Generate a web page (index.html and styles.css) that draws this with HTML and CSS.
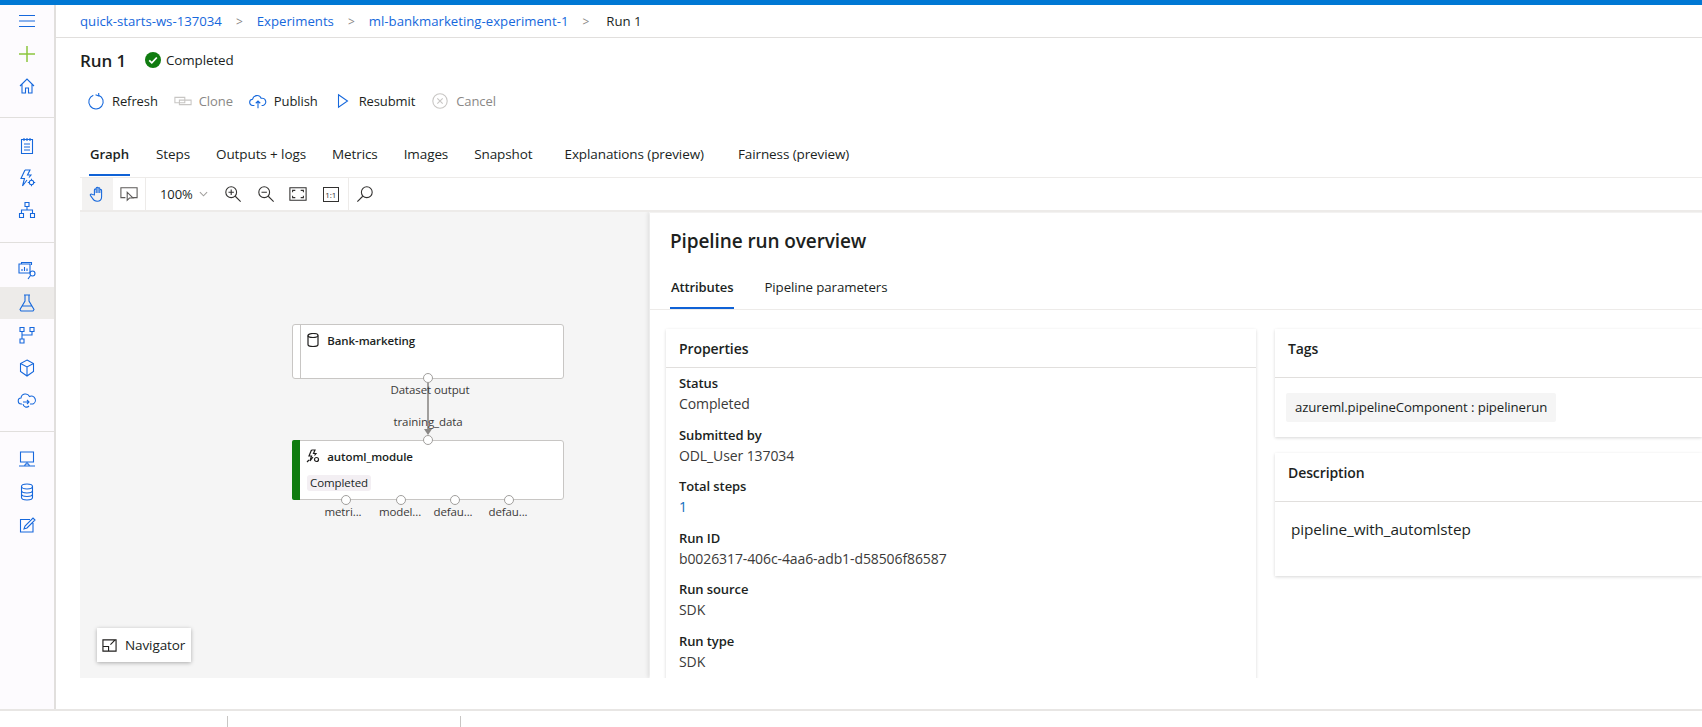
FILE: index.html
```html
<!DOCTYPE html>
<html>
<head>
	<title>Run 1</title>
	<link rel="stylesheet" href="styles.css">
</head>
<body>
	<div class="topbar"></div>
	<div class="shell">
		<nav class="sidebar">
			<div class="nav-group">
				<div class="nav-item"><svg viewBox="0 0 20 20"><path d="M2 4.500h16M2 10h16M2 15.500h16"/></svg></div>
				<div class="nav-item"><svg class="plus" viewBox="0 0 20 20"><path d="M10 2v16M2 10h16"/></svg></div>
				<div class="nav-item"><svg viewBox="0 0 20 20"><path d="M3 10l7-7 7 7M5 8.500V17h3.500v-5h3v5H15V8.500"/></svg></div>
			</div>
			<div class="nav-group">
				<div class="nav-item"><svg viewBox="0 0 20 20"><path d="M4.500 3.500h11v14h-11zM7 2v3M10 2v3M13 2v3M7 8h6M7 11h6M7 14h6"/></svg></div>
				<div class="nav-item"><svg viewBox="0 0 20 20"><path d="M8 2L4 10.500h3.500L5.500 18l4.500-6M8 2h5l-2.500 5H14l-2 2.500"/><circle cx="14.500" cy="14.500" r="2.200"/><path d="M14.500 10.800v1.500M14.500 16.700v1.500M10.800 14.500h1.500M16.700 14.500h1.500"/></svg></div>
				<div class="nav-item"><svg viewBox="0 0 20 20"><path d="M8 2.500h4v4H8zM2.500 13.500h4v4h-4zM13.500 13.500h4v4h-4zM10 6.500V10M4.500 13.500V10h11v3.500"/></svg></div>
			</div>
			<div class="nav-group">
				<div class="nav-item"><svg viewBox="0 0 20 20"><path d="M2 3h11v9H2zM4.500 3V1.500h10V4M5 10V8M7.500 10V6M10 10V7.500M11 18l2.500-3.500"/><circle cx="15.500" cy="12.500" r="2.500"/></svg></div>
				<div class="nav-item active"><svg viewBox="0 0 20 20"><path d="M7 2h6M8 2v6l-5 8.500 1 1.500h12l1-1.500L12 8V2M5.500 13h9"/></svg></div>
				<div class="nav-item"><svg viewBox="0 0 20 20"><path d="M3 2.500h4v4H3zM13 2.500h4v4h-4zM3 14h4v4H3zM5 6.500V14M5 10h10V6.500"/></svg></div>
				<div class="nav-item"><svg viewBox="0 0 20 20"><path d="M10 2l6.500 3.500v8L10 18l-6.500-4.500v-8zM3.500 5.500L10 9l6.500-3.500M10 9v9"/></svg></div>
				<div class="nav-item"><svg viewBox="0 0 20 20"><path d="M5 14H4.500a3 3 0 0 1-.5-6 4.500 4.500 0 0 1 8.500-1.500 3.500 3.500 0 0 1 3.500 7.500h-3"/><path d="M6 12h6M10 10l2 2-2 2M12 16a3.500 3.500 0 0 1-6-2"/></svg></div>
			</div>
			<div class="nav-group last">
				<div class="nav-item"><svg viewBox="0 0 20 20"><path d="M3.500 3h13v10h-13zM10 13v2M7.500 17l1-2h3l1 2zM2 17h16"/></svg></div>
				<div class="nav-item"><svg viewBox="0 0 20 20"><ellipse cx="10" cy="4.500" rx="5.500" ry="2.500"/><path d="M4.500 4.500v11c0 1.500 2.500 2.500 5.500 2.500s5.500-1 5.500-2.500v-11M4.500 8.500c0 1.500 2.500 2.500 5.500 2.500s5.500-1 5.500-2.500M4.500 12c0 1.500 2.500 2.500 5.500 2.500s5.500-1 5.500-2.500"/></svg></div>
				<div class="nav-item"><svg viewBox="0 0 20 20"><path d="M16 8v9H3.500V4.500H13M7 14l1-3 8-8 2 2-8 8z"/></svg></div>
			</div>
		</nav>

		<main class="main">
			<div class="breadcrumb">
				<a class="crumb">quick-starts-ws-137034</a>
				<span class="crumb-sep">&gt;</span>
				<a class="crumb">Experiments</a>
				<span class="crumb-sep">&gt;</span>
				<a class="crumb">ml-bankmarketing-experiment-1</a>
				<span class="crumb-sep">&gt;</span>
				<span class="crumb-current">Run 1</span>
			</div>

			<div class="content">
				<div class="title-row">
					<h1 class="run-title">Run 1</h1>
					<svg class="status-icon" viewBox="0 0 16 16"><circle cx="8" cy="8" r="8" fill="#107c10"/><path d="M4.200 8.300l2.600 2.500 5-5.300" fill="none" stroke="#fff" stroke-width="1.800"/></svg>
					<span class="status-text">Completed</span>
				</div>

				<div class="commands">
					<div class="cmd refresh"><svg viewBox="0 0 20 20"><path d="M7 3.500a8 8 0 1 0 6 0M13 1v3.500L9.500 3"/></svg>Refresh</div>
					<div class="cmd disabled clone"><svg viewBox="0 0 20 20"><path d="M1 6h11v6H1zM6 9h13v5H6z"/></svg>Clone</div>
					<div class="cmd publish"><svg viewBox="0 0 20 20"><path d="M6 15H4.500a3.500 3.500 0 0 1-.5-7 5 5 0 0 1 9.500-1 4 4 0 0 1 2 8H14M10 18v-8M7.500 12.500L10 10l2.500 2.500"/></svg>Publish</div>
					<div class="cmd resubmit"><svg viewBox="0 0 20 20"><path d="M5 3l10 7-10 7z"/></svg>Resubmit</div>
					<div class="cmd disabled cancel"><svg viewBox="0 0 20 20"><circle cx="10" cy="10" r="8"/><path d="M7 7l6 6M13 7l-6 6"/></svg>Cancel</div>
				</div>

				<div class="tabs">
					<span class="tab active">Graph</span>
					<span class="tab">Steps</span>
					<span class="tab">Outputs + logs</span>
					<span class="tab">Metrics</span>
					<span class="tab">Images</span>
					<span class="tab">Snapshot</span>
					<span class="tab explain">Explanations (preview)</span>
					<span class="tab fair">Fairness (preview)</span>
				</div>

				<div class="toolbar">
					<div class="tool hand"><svg viewBox="0 0 20 20"><path d="M6 11V5.500a1 1 0 0 1 2 0V9 3.500a1 1 0 0 1 2 0V9 4a1 1 0 0 1 2 0v5-3a1 1 0 0 1 2 0v7c0 3-2 5-5 5s-4-1-5-3l-2.500-3.500c-.5-1 1-2 2-1z"/></svg></div>
					<div class="tool select"><svg viewBox="0 0 20 20"><path d="M6 14H1V3h18v11h-5M8 8v9l2.500-2.500h4z"/></svg></div>
					<div class="tool-sep"></div>
					<div class="zoom-level">100%<svg class="chevron" viewBox="0 0 10 6"><path d="M1 1l4 4 4-4"/></svg></div>
					<div class="tool dark"><svg viewBox="0 0 20 20"><circle cx="8" cy="8" r="6"/><path d="M12.500 12.500l6 6M5 8h6M8 5v6"/></svg></div>
					<div class="tool dark"><svg viewBox="0 0 20 20"><circle cx="8" cy="8" r="6"/><path d="M12.500 12.500l6 6M5 8h6"/></svg></div>
					<div class="tool dark"><svg viewBox="0 0 20 20"><path d="M1 3h18v14H1zM4 8V6h3M13 6h3v2M16 12v2h-3M7 14H4v-2"/></svg></div>
					<div class="tool dark"><span class="one-one">1:1</span></div>
					<div class="tool-sep"></div>
					<div class="tool dark"><svg viewBox="0 0 20 20"><circle cx="12" cy="8" r="6"/><path d="M7.500 12.500l-6 6"/></svg></div>
				</div>

				<div class="graph-area">
					<section class="canvas">
						<div class="edge"></div>
						<div class="arrow"></div>

						<div class="node dataset">
							<div class="node-bar"></div>
							<svg class="node-icon" viewBox="0 0 14 14"><ellipse cx="7" cy="2.500" rx="5" ry="2"/><path d="M2 2.500v9c0 1 2 2 5 2s5-1 5-2v-9"/></svg>
							<span class="node-name">Bank-marketing</span>
						</div>
						<span class="port" style="left:343px;top:161px"></span>
						<span class="port-label" style="left:300px;top:170px;width:100px">Dataset output</span>
						<span class="port-label" style="left:298px;top:202px;width:100px">training_data</span>

						<div class="node module">
							<div class="node-bar done"></div>
							<svg class="node-icon" viewBox="0 0 14 14"><path d="M5.500 1L3 7h2.500L4 12l3-4M5.500 1h3.500L7.500 4.500h2.500L8.500 6.500M1 13l2-2"/><circle cx="10.500" cy="10.500" r="2"/></svg>
							<span class="node-name">automl_module</span>
							<span class="node-chip">Completed</span>
						</div>
						<span class="port" style="left:343px;top:223px"></span>
						<span class="port" style="left:261px;top:283px"></span>
						<span class="port" style="left:316px;top:283px"></span>
						<span class="port" style="left:370px;top:283px"></span>
						<span class="port" style="left:424px;top:283px"></span>
						<span class="port-label" style="left:233px;top:292px;width:60px">metri...</span>
						<span class="port-label" style="left:290px;top:292px;width:60px">model...</span>
						<span class="port-label" style="left:343px;top:292px;width:60px">defau...</span>
						<span class="port-label" style="left:398px;top:292px;width:60px">defau...</span>

						<div class="navigator">
							<svg viewBox="0 0 16 16"><path d="M1 2h14v12H1zM1 9h6v5M9 7l5-5M10.500 2H15v4"/></svg>
							Navigator
						</div>
					</section>

					<section class="panel">
						<h2 class="panel-title">Pipeline run overview</h2>
						<div class="panel-tabs">
							<span class="panel-tab active">Attributes</span>
							<span class="panel-tab">Pipeline parameters</span>
						</div>
						<div class="panel-body">
							<div class="card properties">
								<h3 class="card-title">Properties</h3>
								<dl class="props">
									<dt>Status</dt>
									<dd>Completed</dd>
									<dt>Submitted by</dt>
									<dd>ODL_User 137034</dd>
									<dt>Total steps</dt>
									<dd class="link">1</dd>
									<dt>Run ID</dt>
									<dd>b0026317-406c-4aa6-adb1-d58506f86587</dd>
									<dt>Run source</dt>
									<dd>SDK</dd>
									<dt>Run type</dt>
									<dd>SDK</dd>
								</dl>
							</div>
							<div class="side-cards">
								<div class="card tags">
									<h3 class="card-title tall">Tags</h3>
									<div class="tags-body"><span class="tag">azureml.pipelineComponent : pipelinerun</span></div>
								</div>
								<div class="card description">
									<h3 class="card-title tall">Description</h3>
									<p class="desc-text">pipeline_with_automlstep</p>
								</div>
							</div>
						</div>
					</section>
				</div>
			</div>
		</main>
	</div>
	<footer class="bottombar">
		<span class="bottom-cell first"></span>
		<span class="bottom-cell"></span>
	</footer>
</body>
</html>
```

FILE: styles.css
```css
* {
	box-sizing: border-box;
}
body {
	margin: 0;
	height: 727px;
	overflow: hidden;
	background: #fff;
	color: #201f1e;
	font-family: "Open Sans", "Noto Sans", sans-serif;
	font-size: 13px;
	letter-spacing: -0.1px;
	display: flex;
	flex-direction: column;
}
svg {
	fill: none;
	stroke: currentColor;
	stroke-width: 1.200;
}
.topbar {
	height: 5px;
	background: #0078d4;
	flex: none;
}
.shell {
	display: flex;
	height: 704px;
	flex: none;
}

/* left nav */
.sidebar {
	width: 56px;
	flex: none;
	background: #fdfbfe;
	border-right: 2px solid #e1dfdd;
	color: #1668dc;
}
.nav-group {
	padding: 0 0 14.500px;
	border-bottom: 1px solid #e1dfdd;
}
.nav-group:nth-child(1) .nav-item {
	height: 32.500px;
}
.nav-group:nth-child(2) {
	padding: 12px 0 16px;
}
.nav-group:nth-child(2) .nav-item {
	height: 32px;
}
.nav-group:nth-child(3) {
	padding: 11.500px 0 15px;
}
.nav-group:nth-child(3) .nav-item {
	height: 32.300px;
}
.nav-group.last {
	padding: 11px 0 12px;
	border-bottom: none;
}
.nav-item {
	height: 33px;
	display: flex;
	align-items: center;
	justify-content: center;
}
.nav-item svg {
	width: 20px;
	height: 20px;
	stroke-width: 1.100;
}
.nav-item .plus {
	color: #8cc63f;
	width: 20px;
	height: 20px;
	stroke-width: 1.500;
}
.nav-item.active {
	background: #edebe9;
}

.main {
	flex: 1;
	min-width: 0;
}
.breadcrumb {
	height: 33px;
	padding-left: 24px;
	border-bottom: 1px solid #e1dfdd;
	display: flex;
	align-items: center;
	font-size: 13.200px;
	letter-spacing: 0;
}
.crumb {
	color: #1668dc;
}
.crumb-sep {
	color: #8a8886;
	margin: 0 14px;
	font-size: 12px;
}
.crumb-current {
	color: #201f1e;
	margin-left: 3px;
}

.content {
	padding-left: 24px;
}
.title-row {
	height: 44px;
	display: flex;
	align-items: center;
}
.run-title {
	margin: 0;
	font-size: 17px;
	font-weight: 600;
	width: 65px;
}
.status-icon {
	width: 16px;
	height: 16px;
	stroke: none;
	margin-right: 5px;
}
.status-text {
	font-size: 13.400px;
}

.commands {
	height: 38px;
	display: flex;
	align-items: center;
	padding-left: 7px;
}
.cmd {
	display: flex;
	align-items: center;
	gap: 7px;
	margin-right: 16px;
	color: #201f1e;
}
.cmd svg {
	width: 18px;
	height: 18px;
	color: #1668dc;
}
.cmd.disabled {
	color: #8a8886;
}
.cmd.disabled svg {
	color: #c8c6c4;
}

.tabs {
	height: 56px;
	display: flex;
	align-items: flex-end;
	padding-left: 9px;
	gap: 26px;
	font-size: 13.500px;
}
.tab {
	height: 40px;
	padding-top: 9px;
	border-bottom: 2px solid transparent;
}
.tab.active {
	font-weight: 600;
	font-size: 13.200px;
	padding: 9px 1px 0;
	border-bottom-color: #0f62d6;
}
.tab.explain {
	margin-left: 6px;
}
.tab.fair {
	margin-left: 8px;
}

.toolbar {
	height: 35px;
	border-top: 1px solid #edebe9;
	border-bottom: 2px solid #edebe9;
	margin-top: 1px;
	display: flex;
	align-items: center;
	padding-left: 2px;
}
.tool {
	width: 31px;
	height: 32px;
	display: flex;
	align-items: center;
	justify-content: center;
	color: #5c5a58;
}
.tool svg {
	width: 18px;
	height: 18px;
}
.tool.hand {
	background: #f3f2f1;
	color: #1668dc;
}
.tool.dark {
	width: 32.500px;
	color: #323130;
}
.tool-sep {
	width: 1px;
	height: 32px;
	margin-left: 1px;
	background: #edebe9;
}
.zoom-level {
	width: 71px;
	padding-left: 14px;
	display: flex;
	align-items: center;
	gap: 6px;
}
.chevron {
	width: 9px;
	height: 6px;
	color: #a19f9d;
}
.one-one {
	width: 16px;
	height: 15px;
	border: 1px solid #323130;
	font-size: 8px;
	line-height: 13px;
	text-align: center;
	letter-spacing: 0;
}

.graph-area {
	height: 466px;
	display: flex;
}

/* graph canvas, nodes are placed by their diagram position */
.canvas {
	width: 569px;
	flex: none;
	background: #f5f5f5;
	position: relative;
	margin-right: 1px;
}
.node {
	position: absolute;
	left: 212px;
	width: 272px;
	background: #fff;
	border: 1px solid #c8c6c4;
	border-radius: 3px;
	padding-left: 13px;
}
.node.dataset {
	top: 112px;
	height: 55px;
	padding-top: 6px;
}
.node.module {
	top: 228px;
	height: 60px;
	padding-top: 6px;
}
.node-bar {
	position: absolute;
	left: 0;
	top: 0;
	bottom: 0;
	width: 8px;
	border-right: 1px solid #c8c6c4;
	border-radius: 2px 0 0 2px;
}
.node-bar.done {
	left: -1px;
	top: -1px;
	bottom: -1px;
	background: #107c10;
	border: none;
}
.node-icon {
	width: 14px;
	height: 14px;
	color: #201f1e;
	vertical-align: -2px;
	margin-right: 4px;
}
.node-name {
	font-size: 11.500px;
	font-weight: 600;
}
.node-chip {
	display: block;
	width: 64px;
	height: 16px;
	margin: 10px 0 0 1px;
	background: #f3eff3;
	border-radius: 3px;
	font-size: 11.500px;
	line-height: 16px;
	text-align: center;
}
.port {
	position: absolute;
	width: 10px;
	height: 10px;
	background: #fff;
	border: 1px solid #a19f9d;
	border-radius: 50%;
}
.port-label {
	position: absolute;
	font-size: 11.500px;
	line-height: 16px;
	text-align: center;
	color: #3b3a39;
}
.edge {
	position: absolute;
	left: 347px;
	top: 170px;
	width: 2px;
	height: 50px;
	background: #a19f9d;
}
.arrow {
	position: absolute;
	left: 344px;
	top: 217px;
	border-left: 4px solid transparent;
	border-right: 4px solid transparent;
	border-top: 6px solid #8a8886;
}
.navigator {
	position: absolute;
	left: 17px;
	top: 416px;
	width: 94px;
	height: 34px;
	background: #fff;
	box-shadow: 0 1px 4px rgba(0, 0, 0, 0.3);
	display: flex;
	align-items: center;
	padding-left: 5px;
	gap: 8px;
	font-size: 13.500px;
}
.navigator svg {
	width: 15px;
	height: 15px;
	color: #201f1e;
}

/* right panel */
.panel {
	flex: 1;
	min-width: 0;
	overflow: hidden;
	background: #fff;
	border-top: 1px solid #f3f2f1;
	box-shadow: -2px 0 4px rgba(0, 0, 0, 0.1);
	clip-path: inset(0 0 0 -6px);
	padding-top: 15px;
}
.panel-title {
	margin: 0 0 0 20px;
	font-size: 19px;
	font-weight: 600;
	line-height: 26px;
}
.panel-tabs {
	height: 56px;
	border-bottom: 1px solid #edebe9;
	display: flex;
	align-items: flex-end;
	gap: 29px;
	padding-left: 20px;
	font-size: 13.300px;
}
.panel-tab {
	height: 34px;
	padding: 3px 1px 0;
	border-bottom: 2px solid transparent;
}
.panel-tab.active {
	font-weight: 600;
	font-size: 13px;
	border-bottom-color: #0f62d6;
}
.panel-body {
	display: flex;
	gap: 19px;
	padding: 19px 0 0 16px;
}
.card {
	background: #fff;
	box-shadow: 0 1px 3px rgba(0, 0, 0, 0.16);
}
.properties {
	width: 590px;
	flex: none;
}
.card-title {
	margin: 0;
	height: 39px;
	padding: 9px 0 0 13px;
	border-bottom: 1px solid #e1dfdd;
	font-size: 14px;
	font-weight: 600;
	line-height: 22px;
}
.card-title.tall {
	height: 49px;
}
.props {
	margin: 0;
	padding: 6px 13px 20px;
}
.props dt {
	font-size: 13px;
	font-weight: 600;
	line-height: 19px;
}
.props dd {
	margin: 0 0 11.500px;
	font-size: 14px;
	line-height: 21px;
	color: #3b3a39;
}
.props dd.link {
	color: #0f6cbd;
}
.side-cards {
	flex: 1;
	display: flex;
	flex-direction: column;
	gap: 16px;
}
.tags {
	height: 108px;
}
.tags-body {
	padding: 15px 11px;
}
.tag {
	display: inline-block;
	height: 29px;
	padding: 0 9px;
	background: #f5f5f5;
	border-radius: 2px;
	line-height: 29px;
	font-size: 13.200px;
}
.description {
	height: 123px;
}
.desc-text {
	margin: 16px 0 0 16px;
	font-size: 15.300px;
	line-height: 22px;
}

.bottombar {
	height: 18px;
	flex: none;
	border-top: 2px solid #e8e6e4;
	display: flex;
	padding-top: 5px;
	padding-left: 227px;
}
.bottom-cell {
	width: 233px;
	border-left: 1px solid #c8c6c4;
}
```
